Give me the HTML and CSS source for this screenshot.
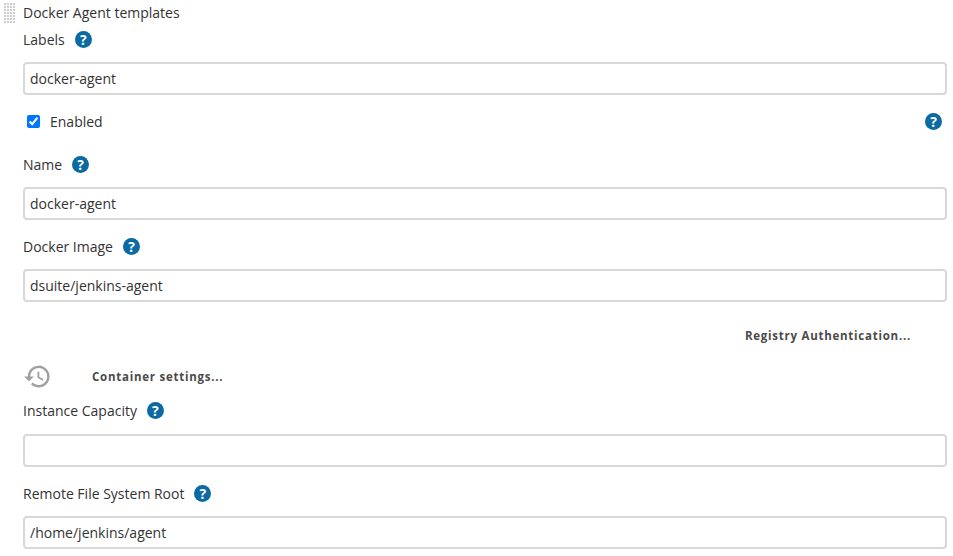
FILE: index.html
```html
<!DOCTYPE html>
<html lang="en">
<head>
  <meta charset="UTF-8" />
  <title>Docker Agent templates</title>
  <link rel="stylesheet" href="styles.css">
</head>
<body>
  <div class="template">
    <div class="handle"></div>
    <div class="form">
      <div class="title">Docker Agent templates</div>

      <div class="field-label field-first">Labels <span class="help">?</span></div>
      <input class="text-input" type="text" value="docker-agent" />

      <div class="check-row">
        <label class="check-label"><input type="checkbox" checked /> Enabled</label>
        <span class="help">?</span>
      </div>

      <div class="field-label field-name">Name <span class="help">?</span></div>
      <input class="text-input" type="text" value="docker-agent" />

      <div class="field-label">Docker Image <span class="help">?</span></div>
      <input class="text-input" type="text" value="dsuite/jenkins-agent" />

      <div class="registry"><span class="advanced">Registry Authentication...</span></div>

      <div class="container-row">
        <svg class="history" viewBox="0 0 24 24" width="29" height="29">
          <path fill="#a0a0a0" d="M13 3a9 9 0 0 0-9 9H1l3.9 3.9.1.1L9 12H6a7 7 0 1 1 2.05 4.95L6.64 18.36A9 9 0 1 0 13 3zm-1 5v5l4.28 2.54.72-1.21-3.5-2.08V8H12z"/>
        </svg>
        <span class="advanced">Container settings...</span>
      </div>

      <div class="field-label field-capacity">Instance Capacity <span class="help">?</span></div>
      <input class="text-input" type="text" value="" />

      <div class="field-label">Remote File System Root <span class="help">?</span></div>
      <input class="text-input" type="text" value="/home/jenkins/agent" />
    </div>
  </div>
</body>
</html>
```

FILE: styles.css
```css
body {
  margin: 0;
  padding: 0;
  background: #fff;
  color: #333;
  font-family: "Open Sans", "Liberation Sans", sans-serif;
  font-size: 14px;
  overflow: hidden;
}

.template {
  display: flex;
  padding: 4px 6px 0 4px;
}

/* drag handle: dots made from two crossed stripe patterns */
.handle {
  flex: none;
  width: 12px;
  height: 21px;
  margin-top: -1px;
  margin-right: 7px;
  background-image: linear-gradient(transparent 2px, #fff 2px), linear-gradient(90deg, #ccc 2px, #fff 2px);
  background-size: 3px 3px;
}

.form {
  flex: 1;
  min-width: 0;
}

.title {
  line-height: 18px;
}

.field-label {
  display: flex;
  align-items: center;
  gap: 10px;
  height: 20px;
  margin-top: 16px;
  margin-bottom: 13px;
}

.field-first {
  margin-top: 7px;
}

.field-name {
  margin-top: 0;
}

.field-capacity {
  margin-top: 0;
  margin-bottom: 14px;
}

.help {
  display: flex;
  align-items: center;
  justify-content: center;
  flex: none;
  width: 17px;
  height: 17px;
  border-radius: 50%;
  background: #0b6aa2;
  color: #fff;
  font-size: 14px;
  font-weight: 700;
  line-height: 17px;
}

.text-input {
  display: block;
  box-sizing: border-box;
  width: 100%;
  height: 33px;
  padding: 0 5px;
  border: 2px solid #d8d8d8;
  border-radius: 4px;
  background: #fff;
  color: #333;
  font-family: inherit;
  font-size: 14px;
  outline: none;
}

.check-row {
  display: flex;
  align-items: center;
  justify-content: space-between;
  height: 20px;
  margin-top: 16px;
  margin-bottom: 23px;
  padding: 0 5px 0 4px;
}

.check-label {
  display: flex;
  align-items: center;
  gap: 10px;
}

.check-label input {
  width: 13px;
  height: 13px;
  margin: 0;
}

.advanced {
  color: #4a4a4a;
  font-size: 11.5px;
  font-weight: 700;
  letter-spacing: 0.75px;
}

.registry {
  display: flex;
  justify-content: flex-end;
  margin-top: 26px;
  padding-right: 36px;
  line-height: 16px;
}

.container-row {
  display: flex;
  align-items: center;
  gap: 40px;
  height: 28px;
  margin-top: 18px;
  margin-bottom: 10px;
}
```
